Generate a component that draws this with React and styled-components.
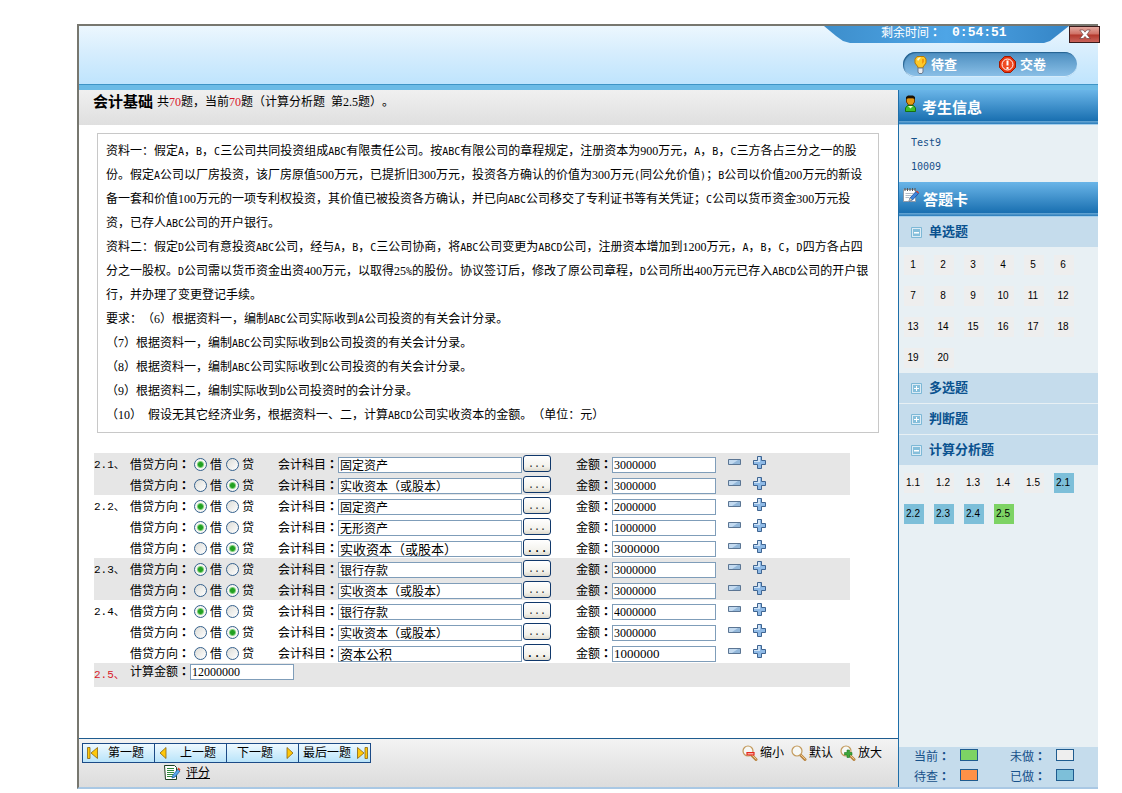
import React from "react";
import styled, { createGlobalStyle, css } from "styled-components";

const GlobalStyle = createGlobalStyle`
  *, *::before, *::after { box-sizing: border-box; }
  body {
    margin: 0;
    background: #fff;
    color: #000;
    font: 12px/16px "Liberation Serif", "Noto Sans CJK SC", serif;
    text-spacing-trim: space-all;
  }
  button, input { font: inherit; color: inherit; margin: 0; }
  p, h1, h2, h3 { margin: 0; }
`;

const Page = styled.div`
  display: flex;
  min-height: 100vh;
  padding: 24px 24px 4px 77px;
`;

const Shell = styled.div`
  flex: 1;
  min-width: 0;
  display: flex;
  flex-direction: column;
  border: 2px solid #77776f;
  border-right: 0;
  border-bottom-color: #a9c8e4;
`;

/* ---------- header ---------- */
const Header = styled.header`
  display: flex;
  flex-direction: column;
  align-items: flex-end;
  gap: 9px;
  height: 64px;
  border-bottom: 5px solid #6bbbe6;
  background: linear-gradient(#ecf7fe, #d6edfd 45%, #bee4fd);
  box-shadow: inset 0 -1px 0 #3f95c6;
`;

const HeaderTop = styled.div`
  display: flex;
  margin-right: -2px;
`;

const Timer = styled.div`
  display: flex;
  gap: 11px;
  width: 245px;
  height: 17px;
  padding-left: 57px;
  color: #fff;
  line-height: 14px;
  background: linear-gradient(90deg, #3d8ecb, #4ea5e6 50%, #3585c6);
  clip-path: polygon(0 0, 100% 0, 226px 15px, 220px 17px, 26px 17px, 19px 15px, 12px 10px);
`;

const Clock = styled.b`
  font-family: "Liberation Mono", monospace;
  font-size: 13px;
`;

const CloseButton = styled.button`
  display: grid;
  place-items: center;
  width: 31px;
  height: 17px;
  padding: 0;
  border: 1px solid #3b1b1b;
  background: linear-gradient(#e3a89f, #cf6f63 48%, #b3382c 52%, #c9635a);
`;

const ActionPill = styled.div`
  display: flex;
  align-items: center;
  gap: 42px;
  width: 174px;
  height: 25px;
  margin-right: 21px;
  padding-left: 11px;
  border-radius: 13px;
  background: linear-gradient(#4b8dbf, #8cc1e8);
  box-shadow: inset 1px 1px 1px #24618f, inset 0 -1px 0 #d4ebfa;
`;

const PillButton = styled.button`
  display: flex;
  align-items: center;
  gap: 4px;
  padding: 0;
  border: 0;
  background: none;
  color: #fff;
  font-size: 13px;
  font-weight: bold;
`;

/* ---------- body ---------- */
const Body = styled.div`
  flex: 1;
  display: grid;
  grid-template-columns: minmax(0, 1fr) 200px;
`;

const Main = styled.main`
  display: flex;
  flex-direction: column;
`;

const TitleBar = styled.div`
  display: flex;
  align-items: center;
  gap: 4px;
  height: 35px;
  padding: 0 14px 11px;
  background: linear-gradient(#f0f0f0, #dfdfdf);
`;

const Title = styled.h1`
  font-size: 15px;
  line-height: 20px;
`;

const Red = styled.span`
  color: #d9182b;
`;

const Latin = styled.span`
  font-family: "DejaVu Sans Mono", monospace;
  font-size: 10px;
  line-height: 1;
`;

/* Full-width colon centred in its cell. */
const ColonMark = styled.span`
  font-family: "Noto Sans CJK JP", sans-serif;
  font-weight: bold;
  line-height: 1;
`;
const Colon = () => <ColonMark>：</ColonMark>;

const Question = styled.section`
  margin: 8px 19px 20px 18px;
  padding: 5px 8px;
  border: 1px solid #c8c8c8;
  line-height: 24px;
`;

const AnswerForm = styled.form`
  flex: 1;
  margin: 0 48px 24px 15px;
`;

const AnswerGroup = styled.fieldset`
  margin: 0;
  padding: 0;
  border: 0;
  background: ${(p) => (p.$shaded ? "#e6e6e6" : "#fff")};
`;

const AnswerRow = styled.div`
  display: flex;
  align-items: center;
  height: ${(p) => (p.$last ? "24px" : "21px")};
  padding-top: ${(p) => (p.$last ? "1px" : "2px")};
  ${(p) => p.$last && css`align-items: flex-start;`}
`;

const RowNumber = styled.span`
  width: 36px;
  color: ${(p) => (p.$active ? "#d9182b" : "#000")};
  line-height: ${(p) => (p.$active ? "22px" : "16px")};
  font-family: "Liberation Mono", "Noto Sans CJK SC", monospace;
  font-size: 11px;
`;

const Caption = styled.label`
  width: ${(p) => p.$width}px;
  white-space: nowrap;
`;

const RadioGroup = styled.div`
  display: flex;
  gap: 4px;
  width: 84px;
`;

const RadioLabel = styled.label`
  display: flex;
  align-items: center;
  gap: 3px;
`;

const Radio = styled.input`
  appearance: none;
  width: 13px;
  height: 13px;
  border: 1px solid #34608c;
  border-radius: 50%;
  background: linear-gradient(135deg, #dcdcd7, #fff);
  &:checked {
    background: radial-gradient(circle, #22a022 0 2px, #7fcf7a 3px, #f6f6f3 4px);
  }
`;

const TextBox = styled.input`
  width: ${(p) => p.$width}px;
  height: 16px;
  padding: ${(p) => (p.$cjk ? "0 1px" : "1px 1px 0")};
  border: 1px solid #7f9db9;
  background: #fff;
  font-size: ${(p) => (p.$large ? "13px" : "12px")};
  line-height: 14px;
`;

const BrowseButton = styled.button`
  width: 28px;
  height: 17px;
  margin: 0 25px 2px 1px;
  padding: 0;
  border: 1px solid #10386b;
  border-radius: 3px;
  background: linear-gradient(#fff, #f3f2ec 70%, #dedacd);
  font: ${(p) => (p.$strong ? "12px" : "10px")}/10px "DejaVu Sans Mono", monospace;
  color: ${(p) => (p.$strong ? "#000" : "#333")};
`;

const IconButton = styled.button`
  display: grid;
  place-items: center;
  width: 13px;
  height: 13px;
  margin: 0 0 5px 12px;
  padding: 0;
  border: 0;
  background: none;
`;

/* ---------- footer ---------- */
const Footer = styled.footer`
  display: flex;
  justify-content: space-between;
  align-items: flex-start;
  height: 49px;
  padding: 4px 16px 0 3px;
  border-top: 1px solid #1f5c8f;
  background: linear-gradient(#f3f3f3, #dcdcdc);
`;

const NavButtons = styled.nav`
  display: flex;
  border: 1px solid #1b4a86;
  background: linear-gradient(#eef9ff, #b9e4fa);
`;

const NavButton = styled.button`
  display: flex;
  align-items: center;
  justify-content: space-between;
  width: 72px;
  height: 18px;
  padding: 0 10px 0 4px;
  border: 0;
  background: none;
  white-space: nowrap;
  & + & { border-left: 1px solid #1b4a86; }
  &:first-child { width: 71px; }
  ${(p) => p.$end && css`padding: 0 ${p.$tight ? "2px 0 4px" : "4px 0 10px"};`}
`;

const ScoreLink = styled.a`
  display: flex;
  align-items: center;
  gap: 5px;
  margin: 1px 0 0 82px;
  color: #000;
`;

const ZoomTools = styled.div`
  display: flex;
  gap: 7px;
`;

const ZoomButton = styled.button`
  display: flex;
  align-items: center;
  gap: 2px;
  height: 20px;
  padding: 0;
  border: 0;
  background: none;
`;

/* ---------- sidebar ---------- */
const Sidebar = styled.aside`
  display: flex;
  flex-direction: column;
  border-left: 1px solid #1f6ea8;
  background: #e8f0f4;
  color: #17518a;
`;

const SideHeader = styled.h2`
  display: flex;
  gap: 4px;
  height: 35px;
  padding: 5px 0 0 4px;
  border-bottom: 1px solid #a4cfec;
  background: linear-gradient(#6ab5e8, #1a70b1 90%, #6ba9d6 91%, #2a7cba);
  color: #fff;
  font-size: 15px;
  line-height: 26px;
`;

const Info = styled.div`
  padding: 6px 12px 3px;
  font: 10px/24px "DejaVu Sans Mono", monospace;
`;

const SectionButton = styled.button`
  display: flex;
  align-items: center;
  gap: 7px;
  width: 100%;
  height: 31px;
  padding: 0 12px;
  border: 0;
  border-bottom: 1px solid #e8f0f4;
  background: #c5dcec;
  color: #0a528f;
  font-size: 13px;
  font-weight: bold;
`;

const CardGrid = styled.div`
  display: grid;
  grid-template-columns: repeat(6, 20px);
  gap: 11px 10px;
  padding: 7px 5px 5px;
`;

const cellColors = { blank: "#eeeeee", done: "#7dbfd9", current: "#7dd364", review: "#ff9147" };

const Cell = styled.button`
  width: 20px;
  height: 20px;
  padding: 0 2px 0 0;
  border: 0;
  background: ${(p) => cellColors[p.$state]};
  color: #000;
  font: 10px/20px "Liberation Sans", sans-serif;
`;

const Legend = styled.div`
  display: grid;
  grid-template-columns: 96px 1fr;
  align-content: start;
  height: 40px;
  margin-top: auto;
  padding-left: 15px;
  background: #c5dcec;
`;

const LegendItem = styled.div`
  display: flex;
  gap: 10px;
  height: 20px;
  line-height: 20px;
`;

const Swatch = styled.span`
  width: 18px;
  height: 12px;
  margin-top: 2px;
  border: 1px solid #1f5c8f;
  background: ${(p) => cellColors[p.$state]};
`;

/* ---------- icons ---------- */
const BulbIcon = () => (
  <svg width="13" height="18" viewBox="0 0 13 18">
    <path d="M3 .5h7L12 3v4L9 11v1H4v-1L1 7V3z" fill="#ffc928" stroke="#b97a00" />
    <path d="M3 3l2-1.500h2L4 5z" fill="#fffbd0" />
    <path d="M8 3v5l2-2V3z" fill="#f39a0c" />
    <path d="M4 12h5v4l-1 1.500H5L4 16z" fill="#e9edf2" stroke="#6b7b8e" />
  </svg>
);

const StopIcon = () => (
  <svg width="17" height="17" viewBox="0 0 17 17">
    <path d="M5.500.5h6l5 5v6l-5 5h-6l-5-5v-6z" fill="#e8340c" stroke="#a01800" />
    <circle cx="8.500" cy="8.500" r="5.500" fill="#f04b22" stroke="#fff" />
    <path d="M7.500 4.500h2v5h-2zM7.500 11h2v2h-2z" fill="#fff" />
  </svg>
);

const CloseIcon = () => (
  <svg width="12" height="11" viewBox="0 0 12 11">
    <path d="M.8 1h3.400L6 3.200 7.800 1h3.400L8 5.500l3.200 4H7.800L6 7.400 4.200 9.500H.8L4 5.500z" fill="#fff" stroke="#5c3434" strokeWidth=".6" />
  </svg>
);

const PersonIcon = () => (
  <svg width="15" height="18" viewBox="0 0 15 18">
    <path d="M3.500 3v4l2 3h4l2-3V3z" fill="#e59a14" stroke="#6e3c00" />
    <path d="M3 4.500V2l2-1.500h5L12 2v2.500L10 3H5z" fill="#1c1206" />
    <path d="M2.500 16.500V13l2-2.500h6l2 2.500v3.500z" fill="#3fbf2d" stroke="#16700f" />
    <path d="M5 11l2.500 2.500L10 11z" fill="#e9ffd8" />
  </svg>
);

const NotebookIcon = () => (
  <svg width="16" height="17" viewBox="0 0 16 17">
    <path d="M.5 2.500h12v12H.5z" fill="#fff" stroke="#8d99a8" />
    <path d="M2 1v3M4.500 1v3M7 1v3M9.500 1v3M12 1v3" stroke="#555" />
    <path d="M2.500 6.500h8M2.500 8.500h6M2.500 10.500h4" stroke="#b4bdc8" />
    <path d="M6 14l1-3 6-6.500 2.500 2L9.500 13z" fill="#3f86dd" stroke="#174a94" strokeWidth=".8" />
    <path d="M13 4.500l1-1 2 2-.8 1z" fill="#e0402b" />
    <path d="M6 14l1-3 2 2z" fill="#f4cf9b" />
  </svg>
);

const ToggleIcon = ({ open }) => (
  <svg width="11" height="11" viewBox="0 0 11 11">
    <path d="M.5.5h10v10H.5z" fill="#dcebf5" stroke="#7db8d6" />
    <path d="M2 2h7v7H2z" fill="#86bfdb" />
    <path d={open ? "M3 5h5v1.500H3z" : "M3 5h2V3h1v2h2v1H6v2H5V6H3z"} fill="#fff" />
  </svg>
);

const MinusIcon = () => (
  <svg width="13" height="13" viewBox="0 0 13 13">
    <path d="M.5 3.500h12v5H.5z" fill="#94b8da" stroke="#5b7593" />
    <path d="M1 4h9L4 8H1z" fill="#c3daf0" />
  </svg>
);

const PlusIcon = () => (
  <svg width="13" height="13" viewBox="0 0 13 13">
    <path d="M4.500.5h4v4h4v4h-4v4h-4v-4h-4v-4h4z" fill="#8fbae6" stroke="#3f6592" />
    <path d="M5 1h2v5H1V5h4z" fill="#d0e4f7" />
  </svg>
);

const ArrowIcon = ({ flip, bar }) => (
  <svg width={bar ? 11 : 8} height="12" viewBox={bar ? "0 0 11 12" : "0 0 8 12"}>
    <g
      transform={flip ? `translate(${bar ? 11 : 8} 0) scale(-1 1)` : undefined}
      fill="#ffc80a"
      stroke="#8a6410"
      strokeWidth=".8"
    >
      {bar && <path d="M.5.5H3v11H.5z" />}
      <path d={bar ? "M10.500.5v11L4 6z" : "M7 .5v11L1 6z"} />
    </g>
  </svg>
);

const ScoreIcon = () => (
  <svg width="17" height="17" viewBox="0 0 17 17">
    <path d="M.5 1.500h10l2 2v12H1.500z" fill="#fff" stroke="#1c3f24" />
    <path d="M3 4.500h7M3 6.500h7M3 8.500h7M3 10.500h6M3 12.500h5" stroke="#2d8a3a" />
    <path d="M8 14l1-3 5-6 2 2-5 6z" fill="#58a8ea" stroke="#1c5a9c" strokeWidth=".8" />
    <path d="M13.500 5l1-1.500 2 2-1 1.500z" fill="#e0402b" />
  </svg>
);

const MagnifierIcon = ({ sign }) => (
  <svg width="16" height="16" viewBox="0 0 16 16">
    <path d="M9.500 10l4.500 4.500" stroke="#b98440" strokeWidth="3" strokeLinecap="round" />
    <path d="M10 10l4 4" stroke="#f0c98d" strokeLinecap="round" />
    <circle cx="6" cy="6" r="5" fill="#f6f8f6" stroke="#c39a5c" strokeWidth="1.200" />
    {sign === "minus" && <path d="M5 7.500h7v2.500H5z" fill="#f9a59c" stroke="#e5281c" strokeWidth="1.200" />}
    {sign === "plus" && <path d="M7 5h2.500v2.500H12V10H9.500v2.500H7V10H4.500V7.500H7z" fill="#3da63a" stroke="#1f7a24" strokeWidth=".6" />}
  </svg>
);

/* ---------- content: each paragraph is a list of phrases that flow on ---------- */
const paragraphs = [
  [
    "资料一：假定A，B，C三公司共同投资组成ABC有限责任公司。按ABC有限公司的章程规定，注册资本为900万元，A，B，C三方各占三分之一的股",
    "份。假定A公司以厂房投资，该厂房原值500万元，已提折旧300万元，投资各方确认的价值为300万元(同公允价值)；B公司以价值200万元的新设",
    "备一套和价值100万元的一项专利权投资，其价值已被投资各方确认，并已向ABC公司移交了专利证书等有关凭证；C公司以货币资金300万元投",
    "资，已存人ABC公司的开户银行。",
  ],
  [
    "资料二：假定D公司有意投资ABC公司，经与A，B，C三公司协商，将ABC公司变更为ABCD公司，注册资本增加到1200万元，A，B，C，D四方各占四",
    "分之一股权。D公司需以货币资金出资400万元，以取得25%的股份。协议签订后，修改了原公司章程，D公司所出400万元已存入ABCD公司的开户银",
    "行，并办理了变更登记手续。",
  ],
  ["要求：（6）根据资料一，编制ABC公司实际收到A公司投资的有关会计分录。"],
  ["（7）根据资料一，编制ABC公司实际收到B公司投资的有关会计分录。"],
  ["（8）根据资料一，编制ABC公司实际收到C公司投资的有关会计分录。"],
  ["（9）根据资料二，编制实际收到D公司投资时的会计分录。"],
  ["（10） 假设无其它经济业务，根据资料一、二，计算ABCD公司实收资本的金额。（单位：元）"],
];

const answers = [
  { no: "2.1", rows: [["debit", "固定资产", "3000000"], ["credit", "实收资本（或股本）", "3000000"]] },
  {
    no: "2.2",
    rows: [
      ["debit", "固定资产", "2000000"],
      ["debit", "无形资产", "1000000"],
      ["credit", "实收资本（或股本）", "3000000", true],
    ],
  },
  { no: "2.3", rows: [["debit", "银行存款", "3000000"], ["credit", "实收资本（或股本）", "3000000"]] },
  {
    no: "2.4",
    rows: [
      ["debit", "银行存款", "4000000"],
      ["credit", "实收资本（或股本）", "3000000"],
      ["", "资本公积", "1000000", true],
    ],
  },
];

const singleChoice = Array.from({ length: 20 }, (_, i) => [String(i + 1), "blank"]);
const analysis = [
  ["1.1", "blank"], ["1.2", "blank"], ["1.3", "blank"], ["1.4", "blank"], ["1.5", "blank"],
  ["2.1", "done"], ["2.2", "done"], ["2.3", "done"], ["2.4", "done"], ["2.5", "current"],
];

/* Sets Latin letters and half-width marks in the half-em face. */
const Mixed = ({ text }) =>
  text.split(/([A-Za-z%() ]+)/).map((part, i) => (i % 2 ? <Latin key={i}>{part}</Latin> : part));

const EntryRow = ({ id, number, entry }) => {
  const [side, account, amount, large] = entry;
  return (
    <AnswerRow>
      <RowNumber>{number}</RowNumber>
      <Caption as="span" $width={64}>借贷方向<Colon /></Caption>
      <RadioGroup role="radiogroup" aria-label="借贷方向">
        <RadioLabel>
          <Radio type="radio" name={`${id}-side`} defaultChecked={side === "debit"} />借
        </RadioLabel>
        <RadioLabel>
          <Radio type="radio" name={`${id}-side`} defaultChecked={side === "credit"} />贷
        </RadioLabel>
      </RadioGroup>
      <Caption htmlFor={`${id}-account`} $width={60}>会计科目<Colon /></Caption>
      <TextBox id={`${id}-account`} $cjk $width={184} $large={large} defaultValue={account} />
      <BrowseButton type="button" $strong={large}>...</BrowseButton>
      <Caption htmlFor={`${id}-amount`} $width={36}>金额<Colon /></Caption>
      <TextBox id={`${id}-amount`} $width={104} $large={large} defaultValue={amount} />
      <IconButton type="button" aria-label="删除"><MinusIcon /></IconButton>
      <IconButton type="button" aria-label="添加"><PlusIcon /></IconButton>
    </AnswerRow>
  );
};

const Card = ({ items }) => (
  <CardGrid>
    {items.map(([label, state]) => (
      <Cell key={label} type="button" $state={state}>{label}</Cell>
    ))}
  </CardGrid>
);

const Section = ({ title, items }) => (
  <>
    <SectionButton type="button" aria-expanded={!!items}>
      <ToggleIcon open={!!items} />
      {title}
    </SectionButton>
    {items && <Card items={items} />}
  </>
);

export default function App() {
  return (
    <Page>
      <GlobalStyle />
      <Shell>
        <Header>
          <HeaderTop>
            <Timer>
              <span>剩余时间<Colon /></span>
              <Clock>0:54:51</Clock>
            </Timer>
            <CloseButton type="button" aria-label="关闭"><CloseIcon /></CloseButton>
          </HeaderTop>
          <ActionPill>
            <PillButton type="button"><BulbIcon />待查</PillButton>
            <PillButton type="button"><StopIcon />交卷</PillButton>
          </ActionPill>
        </Header>
        <Body>
          <Main>
            <TitleBar>
              <Title>会计基础</Title>
              <span>
                共<Red>70</Red>题，当前<Red>70</Red>题（计算分析题<Latin> </Latin>第2.5题）。
              </span>
            </TitleBar>
            <Question>
              {paragraphs.map((phrases) => (
                <p key={phrases[0]}>
                  {phrases.map((text) => <Mixed key={text} text={text} />)}
                </p>
              ))}
            </Question>
            <AnswerForm>
              {answers.map(({ no, rows }, g) => (
                <AnswerGroup key={no} $shaded={g % 2 === 0} aria-label={no}>
                  {rows.map((entry, i) => (
                    <EntryRow key={i} id={`q${g}-${i}`} number={i === 0 ? `${no}、` : ""} entry={entry} />
                  ))}
                </AnswerGroup>
              ))}
              <AnswerGroup $shaded aria-label="2.5">
                <AnswerRow $last>
                  <RowNumber $active>2.5、</RowNumber>
                  <Caption htmlFor="total" $width={60}>计算金额<Colon /></Caption>
                  <TextBox id="total" $width={104} defaultValue="12000000" />
                </AnswerRow>
              </AnswerGroup>
            </AnswerForm>
            <Footer>
              <div>
                <NavButtons>
                  <NavButton type="button"><ArrowIcon bar />第一题</NavButton>
                  <NavButton type="button"><ArrowIcon />上一题</NavButton>
                  <NavButton type="button" $end>下一题<ArrowIcon flip /></NavButton>
                  <NavButton type="button" $end $tight>最后一题<ArrowIcon bar flip /></NavButton>
                </NavButtons>
                <ScoreLink href="#score"><ScoreIcon />评分</ScoreLink>
              </div>
              <ZoomTools>
                <ZoomButton type="button"><MagnifierIcon sign="minus" />缩小</ZoomButton>
                <ZoomButton type="button"><MagnifierIcon />默认</ZoomButton>
                <ZoomButton type="button"><MagnifierIcon sign="plus" />放大</ZoomButton>
              </ZoomTools>
            </Footer>
          </Main>
          <Sidebar>
            <SideHeader><PersonIcon />考生信息</SideHeader>
            <Info>
              <div>Test9</div>
              <div>10009</div>
            </Info>
            <SideHeader><NotebookIcon />答题卡</SideHeader>
            <Section title="单选题" items={singleChoice} />
            <Section title="多选题" />
            <Section title="判断题" />
            <Section title="计算分析题" items={analysis} />
            <Legend>
              <LegendItem><span>当前<Colon /></span><Swatch $state="current" /></LegendItem>
              <LegendItem><span>未做<Colon /></span><Swatch $state="blank" /></LegendItem>
              <LegendItem><span>待查<Colon /></span><Swatch $state="review" /></LegendItem>
              <LegendItem><span>已做<Colon /></span><Swatch $state="done" /></LegendItem>
            </Legend>
          </Sidebar>
        </Body>
      </Shell>
    </Page>
  );
}
